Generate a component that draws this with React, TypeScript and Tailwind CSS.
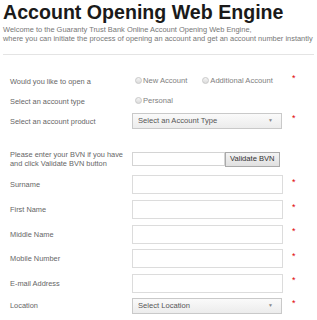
import React from "react";

const Star = () => (
  <span className="ml-[9px] -mt-[5px] text-[9px] leading-none text-[#e00000]">*</span>
);

const Radio = ({ label }: { label: string }) => (
  <span className="flex items-center">
    <span className="inline-block h-[7px] w-[7px] rounded-full border border-[#c8c8c8] bg-gradient-to-b from-[#f4f4f4] to-[#dcdcdc]" />
    <span className="ml-[1px] text-[7.6px] text-[#808080]">{label}</span>
  </span>
);

const SelectBox = ({ text }: { text: string }) => (
  <div className="flex h-[16px] w-[150px] items-center justify-between border border-[#c9c9c9] bg-gradient-to-b from-[#fafafa] to-[#ececec] pl-[5px] pr-[8px] text-[7.6px] text-[#555]">
    <span>{text}</span>
    <span className="text-[5px] text-[#888]">▼</span>
  </div>
);

const Input = () => (
  <div className="h-[19px] w-[151px] border border-[#dcdcdc] bg-white" />
);

const Row = ({
  label,
  h,
  children,
  star,
}: {
  label: React.ReactNode;
  h: string;
  children: React.ReactNode;
  star?: boolean;
}) => (
  <div className={`flex items-center ${h}`}>
    <div className="w-[129px] pl-[7px] text-[7.4px] leading-[9px] text-[#666] whitespace-nowrap">{label}</div>
    <div className="flex w-[151px] items-center">{children}</div>
    {star && <Star />}
  </div>
);

export default function App() {
  return (
    <div
      className="w-[317px] h-[320px] overflow-hidden bg-white px-[3px]"
      style={{ fontFamily: '"Liberation Sans", Arial, sans-serif' }}
    >
      <h1 className="pt-[1px] text-[19.6px] font-bold leading-[23px] text-[#1a1a1a]">
        Account Opening Web Engine
      </h1>
      <p className="mt-[1px] text-[7.45px] leading-[9px] text-[#777] whitespace-nowrap">
        Welcome to the Guaranty Trust Bank Online Account Opening Web Engine,
        <br />
        where you can initiate the process of opening an account and get an account number instantly
      </p>
      <div className="mt-[11px] h-px bg-[#e4e4e4]" />
      <div className="pt-[16px]">
        <Row label="Would you like to open a" h="h-[20px]" star>
          <div className="flex gap-[15px] pl-[3px]">
            <Radio label="New Account" />
            <Radio label="Additional Account" />
          </div>
        </Row>
        <Row label="Select an account type" h="h-[20px]">
          <div className="pl-[3px]">
            <Radio label="Personal" />
          </div>
        </Row>
        <Row label="Select an account product" h="h-[20px]" star>
          <SelectBox text="Select an Account Type" />
        </Row>
        <div className="h-[18px]" />
        <Row
          label={
            <>
              Please enter your BVN if you have
              <br />
              and click Validate BVN button
            </>
          }
          h="h-[20px]"
        >
          <div className="flex items-center">
            <div className="h-[14px] w-[93px] border border-[#d4d4d4] bg-white" />
            <div className="flex h-[15px] items-center border border-[#aaa] bg-gradient-to-b from-[#f4f4f4] to-[#e0e0e0] px-[4px] text-[7.6px] text-[#333]">
              Validate BVN
            </div>
          </div>
        </Row>
        <div className="h-[3px]" />
        <Row label="Surname" h="h-[25px]" star>
          <Input />
        </Row>
        <Row label="First Name" h="h-[25px]" star>
          <Input />
        </Row>
        <Row label="Middle Name" h="h-[24.5px]" star>
          <Input />
        </Row>
        <Row label="Mobile Number" h="h-[24.5px]" star>
          <Input />
        </Row>
        <Row label="E-mail Address" h="h-[24.5px]" star>
          <Input />
        </Row>
        <Row label="Location" h="h-[20px]" star>
          <SelectBox text="Select Location" />
        </Row>
      </div>
    </div>
  );
}
